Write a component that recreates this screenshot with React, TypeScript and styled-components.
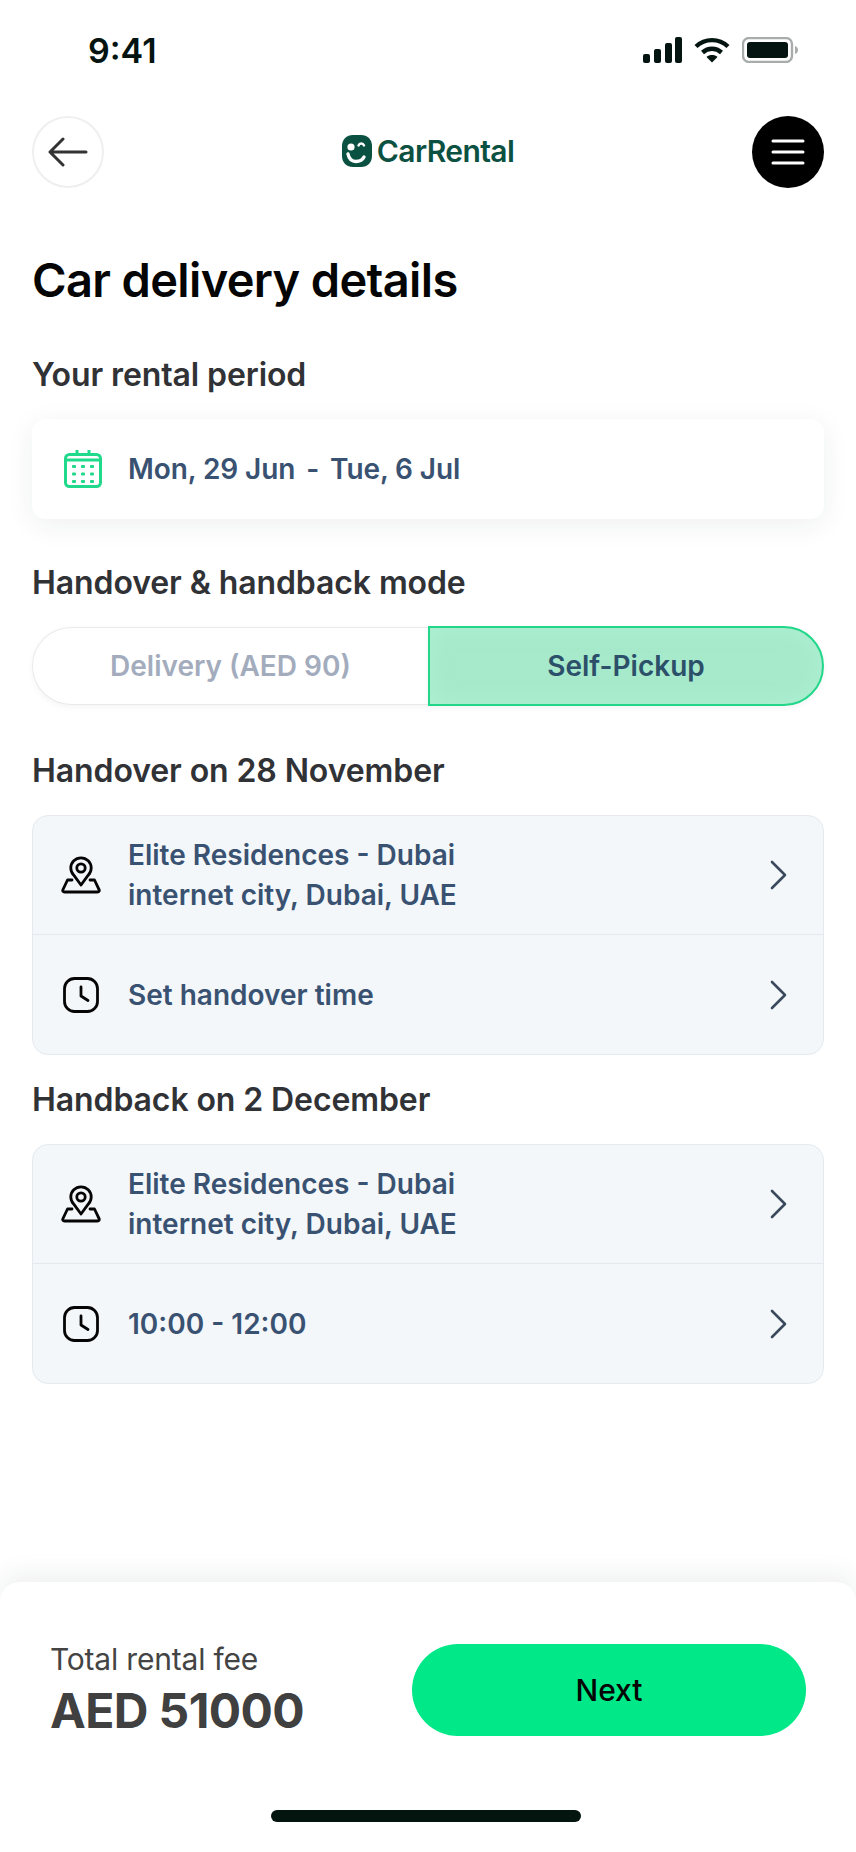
import React from 'react';
import styled, { createGlobalStyle } from 'styled-components';

const GlobalStyle = createGlobalStyle`
  html, body {
    margin: 0;
    padding: 0;
    background: #fff;
  }
  * {
    box-sizing: border-box;
  }
`;

const Page = styled.div`
  width: 856px;
  height: 1852px;
  display: flex;
  flex-direction: column;
  background: #fff;
  font-family: Inter, "Liberation Sans", sans-serif;
  overflow: hidden;
`;

const StatusBar = styled.div`
  height: 100px;
  padding: 0 58px 0 88px;
  display: flex;
  align-items: center;
  justify-content: space-between;
`;

const Clock = styled.div`
  font-size: 34px;
  font-weight: 600;
  color: #041410;
`;

const StatusIcons = styled.div`
  display: flex;
  align-items: center;
  gap: 12px;
`;

const Header = styled.div`
  height: 72px;
  margin-top: 16px;
  padding: 0 32px;
  display: flex;
  align-items: center;
  justify-content: space-between;
`;

const RoundButton = styled.div<{ $dark?: boolean }>`
  width: 72px;
  height: 72px;
  border-radius: 50%;
  display: flex;
  align-items: center;
  justify-content: center;
  background: ${({ $dark }) => ($dark ? '#000' : '#fff')};
  border: ${({ $dark }) => ($dark ? 'none' : '2px solid #eeeff0')};
`;

const Logo = styled.div`
  display: flex;
  align-items: center;
  gap: 5px;
  margin-top: -3px;
  font-size: 30px;
  font-weight: 600;
  letter-spacing: -0.6px;
  color: #0b5141;
`;

const Content = styled.div`
  padding: 0 32px;
  display: flex;
  flex-direction: column;
`;

const Title = styled.h1`
  margin: 62px 0 0;
  font-size: 47px;
  line-height: 60px;
  font-weight: 600;
  letter-spacing: -0.65px;
  color: #050505;
`;

const Label = styled.h2<{ $top: number }>`
  margin: ${({ $top }) => $top}px 0 0;
  height: 44px;
  font-size: 32px;
  line-height: 44px;
  font-weight: 600;
  letter-spacing: -0.1px;
  color: #303236;
`;

const DateCard = styled.div`
  margin-top: 22px;
  height: 100px;
  padding: 0 32px;
  display: flex;
  align-items: center;
  gap: 26px;
  background: #fff;
  border-radius: 14px;
  box-shadow: 0 6px 28px rgba(30, 40, 60, 0.07);
`;

const DateText = styled.div`
  font-size: 28px;
  font-weight: 600;
  letter-spacing: -0.1px;
  color: #3a5271;
`;

const DateDash = styled.span`
  margin: 0 4px;
`;

const Toggle = styled.div`
  margin-top: 21px;
  height: 80px;
  display: flex;
`;

const ToggleOption = styled.div<{ $active?: boolean }>`
  width: 396px;
  margin: ${({ $active }) => ($active ? '0' : '1px 0')};
  display: flex;
  align-items: center;
  justify-content: center;
  font-size: 28px;
  font-weight: 600;
  color: ${({ $active }) => ($active ? '#2c5069' : '#a3acbd')};
  background: ${({ $active }) => ($active ? '#a6e9cb' : '#fff')};
  border: ${({ $active }) => ($active ? '2px solid #22d78a' : '1px solid #e9eaec')};
  border-right: ${({ $active }) => ($active ? '2px solid #22d78a' : 'none')};
  border-radius: ${({ $active }) => ($active ? '0 40px 40px 0' : '40px 0 0 40px')};
  box-shadow: ${({ $active }) =>
    $active
      ? 'inset 0 0 22px rgba(190, 255, 225, 0.35), 0 2px 6px rgba(30, 40, 60, 0.05)'
      : '0 2px 6px rgba(30, 40, 60, 0.05)'};
`;

const InfoCard = styled.div`
  margin-top: 22px;
  height: 240px;
  display: flex;
  flex-direction: column;
  background: #f3f7fa;
  border: 1px solid #e6eaee;
  border-radius: 16px;
`;

const InfoRow = styled.div<{ $height: number }>`
  height: ${({ $height }) => $height}px;
  padding: 0 34px 0 26px;
  display: flex;
  align-items: center;
  gap: 25px;
  & + & {
    border-top: 1px solid #e4e9ee;
  }
`;

const RowIcon = styled.div`
  width: 44px;
  height: 44px;
  flex: none;
  display: flex;
  align-items: center;
  justify-content: center;
`;

const RowText = styled.div`
  flex: 1;
  font-size: 28px;
  line-height: 40px;
  font-weight: 600;
  color: #3a5271;
`;

const Footer = styled.div`
  margin-top: auto;
  height: 270px;
  display: flex;
  flex-direction: column;
  background: #fff;
  border-radius: 20px 20px 0 0;
  box-shadow: 0 -8px 26px rgba(30, 40, 60, 0.07);
`;

const FooterMain = styled.div`
  margin-top: 59px;
  padding: 0 50px;
  display: flex;
  align-items: center;
  justify-content: space-between;
`;

const FeeLabel = styled.div`
  margin-top: -2px;
  font-size: 30px;
  line-height: 40px;
  font-weight: 400;
  letter-spacing: -0.2px;
  color: #444;
`;

const FeeValue = styled.div`
  margin-top: 4px;
  font-size: 48px;
  line-height: 56px;
  font-weight: 700;
  letter-spacing: -0.6px;
  color: #404040;
`;

const NextButton = styled.div`
  width: 394px;
  height: 92px;
  border-radius: 46px;
  display: flex;
  align-items: center;
  justify-content: center;
  background: #00e887;
  font-size: 30px;
  font-weight: 500;
  color: #050505;
`;

const HomeBar = styled.div`
  width: 310px;
  height: 12px;
  margin: 71px 0 0 271px;
  border-radius: 6px;
  background: #04140f;
`;

const PinIcon = () => (
  <svg width="40" height="40" viewBox="0 0 40 40" fill="none" stroke="#050505" strokeWidth="2.8" strokeLinejoin="round" strokeLinecap="round">
    <path d="M20 30 12.800 20.200a10.200 10.200 0 1 1 14.400 0Z" />
    <circle cx="20" cy="13" r="4.200" />
    <path d="M11 25H6.500L2 34.500c-.7 1.400 0 2.500 1.500 2.500h33c1.500 0 2.200-1.100 1.500-2.500L33.500 25H29" />
  </svg>
);

const ClockIcon = () => (
  <svg width="36" height="36" viewBox="0 0 36 36" fill="none" stroke="#050505" strokeWidth="2.800" strokeLinejoin="round" strokeLinecap="round">
    <rect x="1.500" y="1.500" width="33" height="33" rx="10" />
    <path d="M18 10v9l7 4.500" />
  </svg>
);

const Chevron = () => (
  <svg width="20" height="32" viewBox="0 0 20 32" fill="none" stroke="#3a4a5c" strokeWidth="2.6" strokeLinecap="round" strokeLinejoin="round">
    <path d="M3 3l13 13L3 29" />
  </svg>
);

const CalendarIcon = () => {
  const dots = [];
  for (const y of [15, 22.5, 30]) {
    for (const x of [8, 17, 26]) {
      dots.push(<rect key={`${x}-${y}`} x={x} y={y} width="4" height="3" rx="1" fill="#20d98b" />);
    }
  }
  return (
    <svg width="38" height="38" viewBox="0 0 38 38" fill="none">
      <rect x="1.5" y="4.5" width="35" height="32" rx="4" stroke="#20d98b" strokeWidth="3" />
      <path d="M1.5 10h35" stroke="#20d98b" strokeWidth="3" />
      <path d="M13 0v6M25 0v6" stroke="#20d98b" strokeWidth="3" />
      {dots}
    </svg>
  );
};

const InfoBlock: React.FC<{ place: string[]; time: string }> = ({ place, time }) => (
  <InfoCard>
    <InfoRow $height={118}>
      <RowIcon><PinIcon /></RowIcon>
      <RowText>{place[0]}<br />{place[1]}</RowText>
      <Chevron />
    </InfoRow>
    <InfoRow $height={120}>
      <RowIcon><ClockIcon /></RowIcon>
      <RowText>{time}</RowText>
      <Chevron />
    </InfoRow>
  </InfoCard>
);

const address = ['Elite Residences - Dubai', 'internet city, Dubai, UAE'];

export default function App() {
  return (
    <Page>
      <GlobalStyle />
      <StatusBar>
        <Clock>9:41</Clock>
        <StatusIcons>
          <svg width="39" height="26" viewBox="0 0 39 26" fill="#041410">
            <rect x="0" y="17" width="7" height="9" rx="2" />
            <rect x="11" y="12" width="7" height="14" rx="2" />
            <rect x="22" y="6" width="7" height="20" rx="2" />
            <rect x="32" y="0" width="7" height="26" rx="2" />
          </svg>
          <svg width="36" height="26" viewBox="0 0 36 26" fill="none" stroke="#041410" strokeWidth="4.4">
            <path d="M2 9.5C11 1 25 1 34 9.5" />
            <path d="M8.5 15.5c5.5-5 13.500-5 19 0" />
            <path d="M18 25.500 12.500 20c3-2.600 8-2.600 11 0Z" fill="#041410" stroke="none" />
          </svg>
          <svg width="56" height="26" viewBox="0 0 56 26" fill="none">
            <rect x="1" y="1" width="49" height="24" rx="6" stroke="#a8adac" strokeWidth="2.4" />
            <rect x="5" y="5" width="41" height="16" rx="3" fill="#041410" />
            <path d="M53 9c1.800.6 3 2 3 4s-1.200 3.400-3 4Z" fill="#a8adac" />
          </svg>
        </StatusIcons>
      </StatusBar>
      <Header>
        <RoundButton>
          <svg width="40" height="30" viewBox="0 0 40 30" fill="none" stroke="#333" strokeWidth="3" strokeLinecap="round" strokeLinejoin="round">
            <path d="M38 15H3M15 2 2 15l13 13" />
          </svg>
        </RoundButton>
        <Logo>
          <svg width="30" height="32" viewBox="0 0 30 32">
            <path d="M11 0h8c6.500 0 11 4.500 11 11v10c0 6.500-4.500 11-11 11h-8C4.500 32 0 27.500 0 21V11C0 4.500 4.500 0 11 0Z" fill="#0b5141" />
            <circle cx="9" cy="12" r="3.600" fill="#fff" />
            <path d="M16.500 10.500c1-2.600 4.500-2.600 5.500 0" stroke="#fff" strokeWidth="2.400" fill="none" strokeLinecap="round" />
            <path d="M6 19c1 5 4 7.500 8 7.500 3.500 0 6.500-1.500 8-4.500" stroke="#fff" strokeWidth="3.400" fill="none" strokeLinecap="round" />
          </svg>
          CarRental
        </Logo>
        <RoundButton $dark>
          <svg width="34" height="26" viewBox="0 0 34 26" stroke="#fff" strokeWidth="3" strokeLinecap="round">
            <path d="M2 2h30M2 13h30M2 24h30" />
          </svg>
        </RoundButton>
      </Header>
      <Content>
        <Title>Car delivery details</Title>
        <Label $top={43}>Your rental period</Label>
        <DateCard>
          <CalendarIcon />
          <DateText>Mon, 29 Jun <DateDash>-</DateDash> Tue, 6 Jul</DateText>
        </DateCard>
        <Label $top={42}>Handover &amp; handback mode</Label>
        <Toggle>
          <ToggleOption>Delivery (AED 90)</ToggleOption>
          <ToggleOption $active>Self-Pickup</ToggleOption>
        </Toggle>
        <Label $top={43}>Handover on 28 November</Label>
        <InfoBlock place={address} time="Set handover time" />
        <Label $top={23}>Handback on 2 December</Label>
        <InfoBlock place={address} time="10:00 - 12:00" />
      </Content>
      <Footer>
        <FooterMain>
          <div>
            <FeeLabel>Total rental fee</FeeLabel>
            <FeeValue>AED 51000</FeeValue>
          </div>
          <NextButton>Next</NextButton>
        </FooterMain>
        <HomeBar />
      </Footer>
    </Page>
  );
}
